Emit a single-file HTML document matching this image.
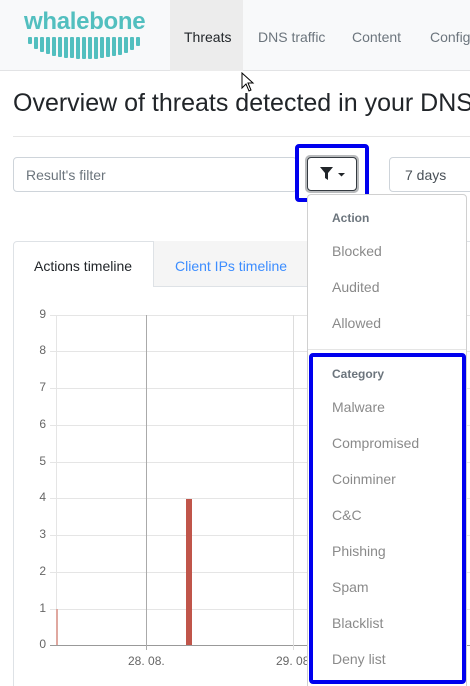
<!DOCTYPE html>
<html><head><meta charset="utf-8"><style>
*{box-sizing:border-box;margin:0;padding:0}
html,body{width:470px;height:686px;overflow:hidden}
body{background:#fff;font-family:"Liberation Sans",sans-serif;position:relative;color:#212529}
#w{position:absolute;left:0;top:0;width:470px;height:686px;overflow:hidden}
.abs{position:absolute}
.nav{left:0;top:0;width:470px;height:71px;background:#f8f9fa;border-bottom:1px solid #e2e3e5}
.navi{top:29px;font-size:14px;color:#6c757d;white-space:nowrap}
.dd{font-size:14px;color:#8a8a8a;left:332px}
.hd{font-size:12px;font-weight:bold;color:#6c757d;left:332px}
.yl{font-size:12px;color:#666;left:34px;width:12px;text-align:right}
.gh{left:50px;width:420px;height:1px;background:#e5e5e5}
</style></head><body><div id="w">
<div class="abs nav"></div>
<div class="abs" style="left:170px;top:0;width:73px;height:71px;background:#ececec"></div>
<div class="abs" style="left:24px;top:8px;font-size:24px;font-weight:bold;color:#52bfbf;letter-spacing:-0.3px">whalebone</div>
<svg class="abs" style="left:0;top:0" width="160" height="70" fill="#52bfbf">
<rect x="28" y="37" width="4" height="7" rx="1"/><rect x="34" y="37" width="4" height="12" rx="1"/><rect x="40" y="37" width="4" height="15" rx="1"/><rect x="46" y="37" width="4" height="17" rx="1"/><rect x="52" y="37" width="4" height="19" rx="1"/><rect x="58" y="37" width="4" height="20" rx="1"/><rect x="64" y="37" width="4" height="21" rx="1"/><rect x="70" y="37" width="4" height="21" rx="1"/><rect x="76" y="37" width="4" height="22" rx="1"/><rect x="82" y="37" width="4" height="22" rx="1"/><rect x="88" y="37" width="4" height="22" rx="1"/><rect x="94" y="37" width="4" height="22" rx="1"/><rect x="100" y="37" width="4" height="21" rx="1"/><rect x="106" y="37" width="4" height="20" rx="1"/><rect x="112" y="37" width="4" height="19" rx="1"/><rect x="118" y="37" width="4" height="18" rx="1"/><rect x="124" y="37" width="4" height="16" rx="1"/><rect x="130" y="37" width="4" height="13" rx="1"/><rect x="136" y="37" width="4" height="9" rx="1"/>
</svg>
<div class="abs navi" style="left:184px;color:#212529">Threats</div>
<div class="abs navi" style="left:258px">DNS traffic</div>
<div class="abs navi" style="left:352px">Content</div>
<div class="abs navi" style="left:430px">Configuration</div>
<svg class="abs" style="left:241px;top:72px" width="16" height="22"><path d="M1 1 L1 16 L5 12 L8 19 L10 18 L7 11 L12 11 Z" fill="#fff" stroke="#000" stroke-width="1"/></svg>
<div class="abs" style="left:13px;top:89px;font-size:25px;white-space:nowrap;color:#212529">Overview of threats detected in your DNS traffic</div>
<div class="abs" style="left:13px;top:136px;width:457px;height:1px;background:#e5e5e5"></div>
<div class="abs" style="left:13px;top:157px;width:284px;height:35px;border:1px solid #ced4da;border-radius:4px"></div>
<div class="abs" style="left:26px;top:167px;font-size:14px;color:#6c757d">Result's filter</div>
<div class="abs" style="left:389px;top:157px;width:100px;height:35px;border:1px solid #ced4da;border-radius:4px"></div>
<div class="abs" style="left:405px;top:167px;font-size:14px;color:#495057">7 days</div>
<div class="abs" style="left:13px;top:241px;width:470px;height:460px;border:1px solid #dee2e6;border-radius:4px"></div>
<div class="abs" style="left:153px;top:241px;width:160px;height:46px;background:#f5f5f5;border-bottom:1px solid #dee2e6;border-left:1px solid #dee2e6"></div>
<div class="abs" style="left:34px;top:258px;font-size:14px;color:#212529">Actions timeline</div>
<div class="abs" style="left:175px;top:258px;font-size:14px;color:#3c8dff">Client IPs timeline</div>
<div class="abs gh" style="top:315px"></div><div class="abs gh" style="top:351px"></div><div class="abs gh" style="top:388px"></div><div class="abs gh" style="top:425px"></div><div class="abs gh" style="top:462px"></div><div class="abs gh" style="top:498px"></div><div class="abs gh" style="top:535px"></div><div class="abs gh" style="top:572px"></div><div class="abs gh" style="top:609px"></div>
<div class="abs" style="left:50px;top:645px;width:420px;height:1px;background:#999"></div>
<div class="abs" style="left:56px;top:315px;width:1px;height:330px;background:#e5e5e5"></div>
<div class="abs" style="left:146px;top:315px;width:1px;height:335px;background:#aaa"></div>
<div class="abs" style="left:293px;top:315px;width:1px;height:335px;background:#ddd"></div>
<div class="abs yl" style="top:307px">9</div><div class="abs yl" style="top:343px">8</div><div class="abs yl" style="top:380px">7</div><div class="abs yl" style="top:417px">6</div><div class="abs yl" style="top:454px">5</div><div class="abs yl" style="top:490px">4</div><div class="abs yl" style="top:527px">3</div><div class="abs yl" style="top:564px">2</div><div class="abs yl" style="top:601px">1</div><div class="abs yl" style="top:637px">0</div>
<div class="abs" style="left:56px;top:609px;width:2px;height:36px;background:#e0a8a0"></div>
<div class="abs" style="left:186px;top:499px;width:6px;height:146px;background:#c0554a"></div>
<div class="abs" style="left:128px;top:654px;font-size:12px;color:#666">28. 08.</div>
<div class="abs" style="left:276px;top:654px;font-size:12px;color:#666">29. 08.</div>
<div class="abs" style="left:295px;top:144px;width:74px;height:58px;border:4px solid #0000ee;border-radius:4px"></div>
<div class="abs" style="left:305px;top:155px;width:54px;height:38px;border:3px solid #b8babc;border-radius:5px"></div>
<div class="abs" style="left:307px;top:157px;width:50px;height:34px;border:1px solid #343a40;border-radius:4px;background:#fff"></div>
<svg class="abs" style="left:320px;top:167px" width="30" height="16"><path d="M0 0 H13 L8 6 V13 L5 11 V6 Z" fill="#212529"/><path d="M18 6 H25 L21.5 9.5 Z" fill="#212529"/></svg>
<div class="abs" style="left:307px;top:194px;width:160px;height:500px;border:1px solid #d0d0d0;border-radius:4px;background:#fff"></div>
<div class="abs hd" style="top:211px">Action</div>
<div class="abs dd" style="top:243px">Blocked</div>
<div class="abs dd" style="top:279px">Audited</div>
<div class="abs dd" style="top:315px">Allowed</div>
<div class="abs" style="left:308px;top:349px;width:158px;height:1px;background:#e5e5e5"></div>
<div class="abs" style="left:309px;top:353px;width:157px;height:331px;border:4px solid #0000ee;border-radius:4px"></div>
<div class="abs hd" style="top:367px">Category</div>
<div class="abs dd" style="top:399px">Malware</div>
<div class="abs dd" style="top:435px">Compromised</div>
<div class="abs dd" style="top:471px">Coinminer</div>
<div class="abs dd" style="top:507px">C&amp;C</div>
<div class="abs dd" style="top:543px">Phishing</div>
<div class="abs dd" style="top:579px">Spam</div>
<div class="abs dd" style="top:615px">Blacklist</div>
<div class="abs dd" style="top:651px">Deny list</div>
</div></body></html>
